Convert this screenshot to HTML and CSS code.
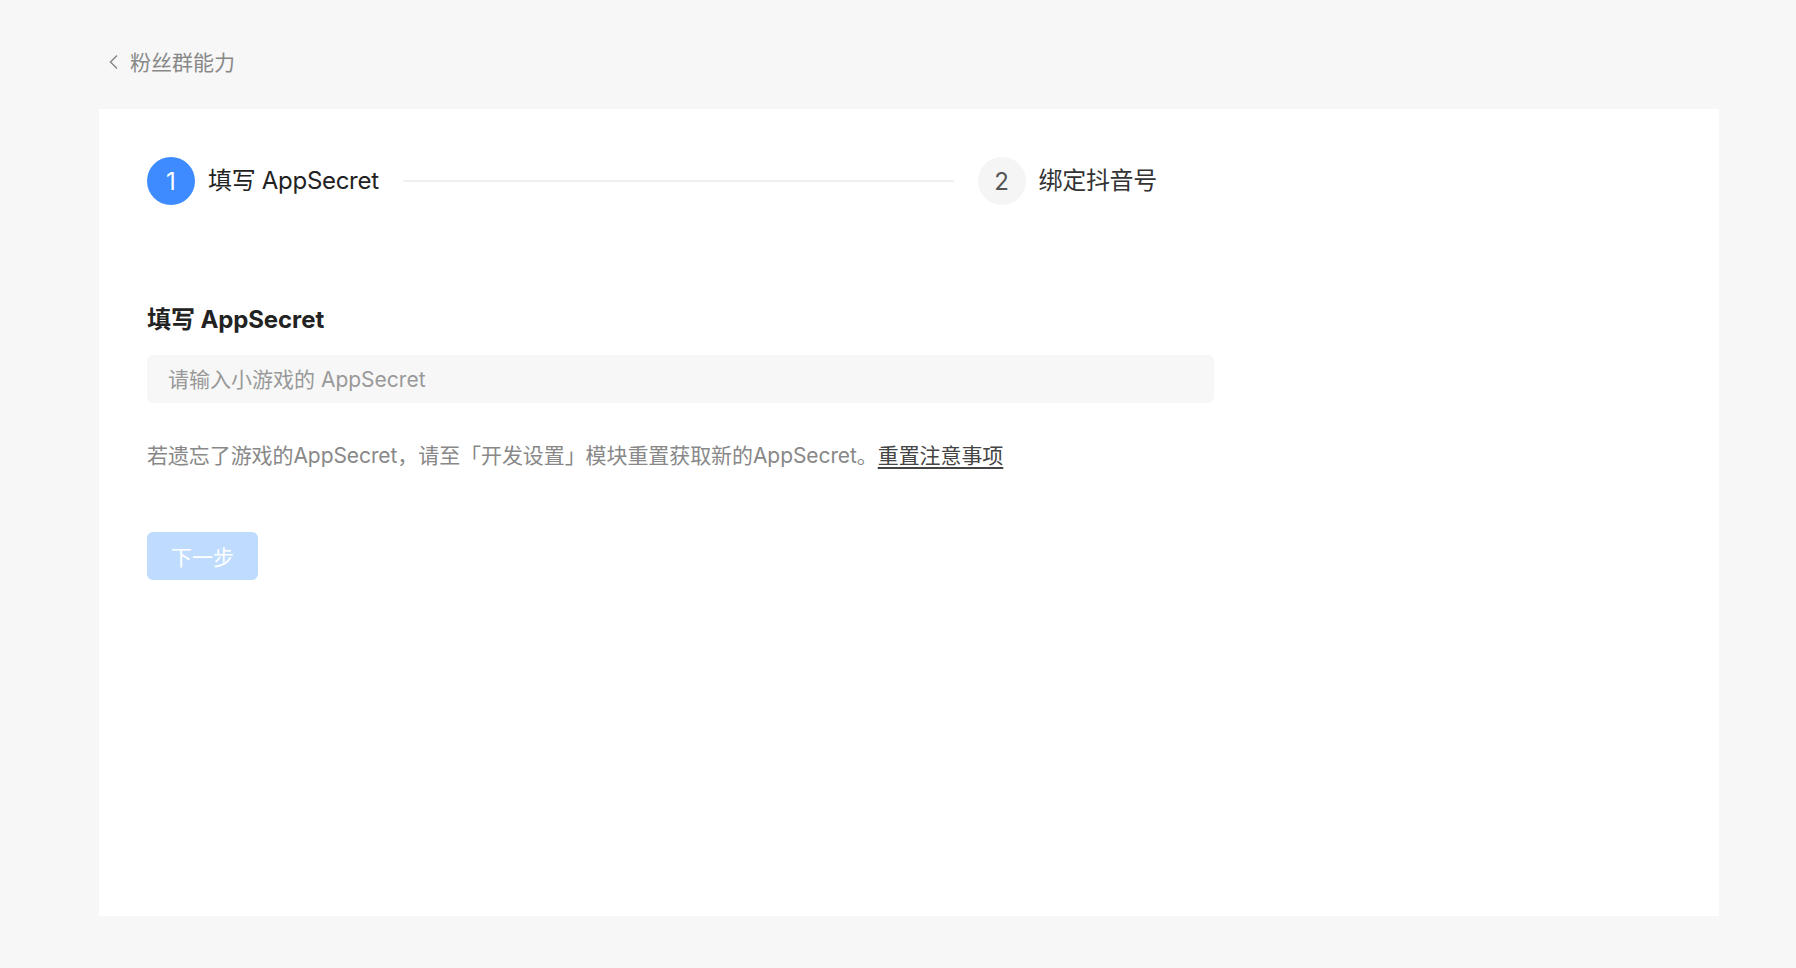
FILE: index.html
```html
<!DOCTYPE html>
<html lang="zh-CN">
<head>
  <meta charset="UTF-8">
  <title>填写 AppSecret</title>
  <meta name="viewport" content="width=device-width, initial-scale=1.0">
  <link rel="stylesheet" href="styles.css">
</head>
<body>

  <div class="page">
    <div class="breadcrumb">
      <svg class="back-icon" width="12" height="16" viewBox="0 0 12 16">
        <path d="M9 1.5 L2.5 8 L9 14.5" fill="none" stroke="#888" stroke-width="1.5"/>
      </svg>
      <span>粉丝群能力</span>
    </div>

    <div class="card">
      <div class="steps">
        <div class="step active">
          <div class="step-num">1</div>
          <div class="step-label">填写 AppSecret</div>
        </div>
        <div class="step-line"></div>
        <div class="step">
          <div class="step-num">2</div>
          <div class="step-label">绑定抖音号</div>
        </div>
      </div>

      <h2 class="form-title">填写 AppSecret</h2>
      <input class="secret-input" type="text" placeholder="请输入小游戏的 AppSecret">

      <p class="help">若遗忘了游戏的AppSecret，请至「开发设置」模块重置获取新的AppSecret。<a href="#">重置注意事项</a></p>

      <button class="next-button" disabled>下一步</button>
    </div>
  </div>

</body>
</html>
```

FILE: styles.css
```css
body {
  margin: 0;
  background: #f7f7f7;
  font-family: 'Inter', 'Noto Sans CJK SC', sans-serif;
  color: #222;
}

.page {
  padding: 0 77px 52px 99px;
}

.breadcrumb {
  display: flex;
  align-items: center;
  gap: 10px;
  height: 30px;
  padding: 46px 0 33px 9px;
  font-size: 21px;
  color: #888;
}

.back-icon {
  margin-top: 2px;
}

.card {
  background: #fff;
  height: 807px;
  padding: 48px;
  box-sizing: border-box;
}

.steps {
  display: flex;
  align-items: center;
  width: 1010px;
}

.step {
  display: flex;
  align-items: center;
  gap: 13px;
}

.step-num {
  width: 48px;
  height: 48px;
  border-radius: 50%;
  background: #f5f5f5;
  color: #555;
  font-size: 24px;
  display: flex;
  align-items: center;
  justify-content: center;
}

.step.active .step-num {
  background: #3d8bff;
  color: #fff;
}

.step-label {
  font-size: 24px;
  line-height: 30px;
  padding-bottom: 1px;
  color: #333;
  letter-spacing: -0.3px;
}

.step.active .step-label {
  color: #222;
}

.step-line {
  flex: 1;
  height: 2px;
  background: #f0f0f0;
  margin: 0 24px;
}

.form-title {
  margin: 97px 0 0;
  font-size: 24px;
  line-height: 36px;
  font-weight: bold;
  color: #222;
  letter-spacing: -0.1px;
}

.secret-input {
  display: block;
  margin-top: 17px;
  width: 1067px;
  height: 48px;
  box-sizing: border-box;
  padding: 0 21px;
  border: none;
  border-radius: 6px;
  background: #f7f7f7;
  font-family: inherit;
  font-size: 21px;
  color: #222;
  outline: none;
}

.secret-input::placeholder {
  color: #999;
}

.help {
  margin: 37px 0 0;
  font-size: 21px;
  line-height: 32px;
  color: #888;
  letter-spacing: -0.08px;
}

.help a {
  color: #444;
  text-decoration: underline;
  text-underline-offset: 4px;
}

.next-button {
  display: block;
  margin-top: 60px;
  height: 48px;
  padding: 0 24px;
  border: none;
  border-radius: 6px;
  background: #bfdcff;
  color: #fff;
  font-family: inherit;
  font-size: 21px;
}
```
